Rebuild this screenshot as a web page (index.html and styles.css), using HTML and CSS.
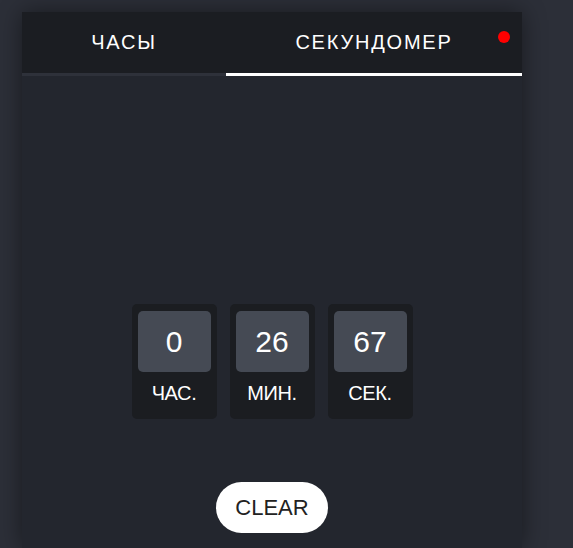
FILE: index.html
```html
<!DOCTYPE html>
<html lang="ru">
<head>
<meta charset="utf-8">
<title>Секундомер</title>
<link rel="stylesheet" href="styles.css">
</head>
<body>
<div class="card">
  <div class="tabs">
    <div class="tab">ЧАСЫ</div>
    <div class="tab active">СЕКУНДОМЕР<span class="dot"></span></div>
  </div>
  <div class="content">
    <div class="timer">
      <div class="unit"><div class="value">0</div><div class="label">ЧАС.</div></div>
      <div class="unit"><div class="value">26</div><div class="label">МИН.</div></div>
      <div class="unit"><div class="value">67</div><div class="label">СЕК.</div></div>
    </div>
    <button class="clear">CLEAR</button>
  </div>
</div>
</body>
</html>
```
FILE: styles.css
```css
html, body {
  margin: 0;
  padding: 0;
  height: 100%;
  overflow: hidden;
}
body {
  background: #2c2f38;
  font-family: "Liberation Sans", Arial, sans-serif;
  padding: 12px 0 0 22px;
  box-sizing: border-box;
}
.card {
  width: 500px;
  height: 100%;
  background: #23262e;
  box-shadow: 0 0 22px rgba(0, 0, 0, 0.45);
}
.tabs {
  display: grid;
  grid-template-columns: 204px 1fr;
  background: #1b1d22;
}
.tab {
  position: relative;
  height: 61px;
  display: flex;
  align-items: center;
  justify-content: center;
  color: #ffffff;
  font-size: 20px;
  letter-spacing: 1.8px;
  border-bottom: 3px solid #2e313a;
}
.tab.active {
  border-bottom-color: #ffffff;
}
.dot {
  position: absolute;
  right: 12px;
  top: 19px;
  width: 12px;
  height: 12px;
  border-radius: 50%;
  background: #ff0000;
}
.content {
  display: flex;
  flex-direction: column;
  align-items: center;
  padding-top: 228px;
}
.timer {
  display: flex;
  gap: 13px;
}
.unit {
  width: 85px;
  height: 115px;
  box-sizing: border-box;
  background: #1b1d21;
  border-radius: 5px;
  padding: 7px 6px 0;
  display: flex;
  flex-direction: column;
  align-items: center;
}
.value {
  width: 73px;
  height: 61px;
  background: #454a54;
  border-radius: 5px;
  color: #ffffff;
  font-size: 30px;
  display: flex;
  align-items: center;
  justify-content: center;
}
.label {
  margin-top: 10px;
  color: #ffffff;
  font-size: 20px;
  letter-spacing: -0.4px;
}
.clear {
  margin-top: 63px;
  width: 112px;
  height: 51px;
  border: none;
  border-radius: 26px;
  background: #ffffff;
  color: #222222;
  font-family: "Liberation Sans", Arial, sans-serif;
  font-size: 22px;
  padding: 0;
}
```
